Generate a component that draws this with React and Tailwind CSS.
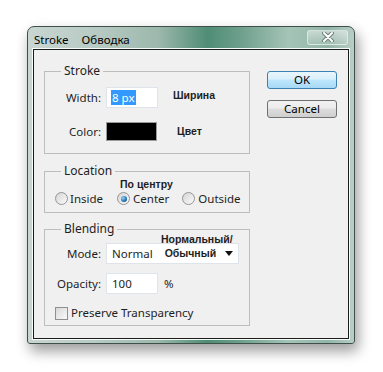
import React from 'react';

const ui = { fontFamily: '"Noto Sans", "Open Sans", sans-serif' };
const note = { fontFamily: '"Liberation Sans", Arial, sans-serif' };

function Radio({ checked }) {
  return (
    <span className="flex h-[13px] w-[13px] items-center justify-center rounded-full border border-[#959595] bg-[linear-gradient(135deg,#d4d4d4,#fbfbfb)]">
      {checked && (
        <span className="h-[6px] w-[6px] rounded-full bg-[radial-gradient(circle_at_35%_35%,#9ad3f5,#1c6fae_60%,#0d3f6b)]" />
      )}
    </span>
  );
}

function Group({ title, className, children }) {
  return (
    <fieldset className={`border border-[#bdbdbd] ${className}`}>
      <legend className="ml-[16px] px-[3px] text-[12px] leading-[16px] text-[#1e1e1e]">{title}</legend>
      {children}
    </fieldset>
  );
}

function Field({ children, className }) {
  return (
    <div className={`flex h-[21px] items-center border border-[#dfe4ea] bg-white ${className}`}>{children}</div>
  );
}

export default function App() {
  return (
    <div className="h-[372px] w-[383px] overflow-hidden bg-white pl-[27px] pt-[26px]" style={ui}>
      <div className="h-[318px] w-[328px] rounded-t-[7px] rounded-b-[3px] border border-[#3f4f49] bg-[linear-gradient(to_right,#c9d5d1_0%,#b8cbc4_20%,#9db8ad_40%,#4f8d75_55%,#6e9f8c_65%,#a5c4b8_80%,#93b5a8_92%,#b9cec6_100%)] shadow-[3px_7px_14px_rgba(0,0,0,0.4)]">
        <div className="flex h-[22px] items-center pl-[6px] pr-[6px] pt-[3px] text-[11.5px] text-black">
          <span>Stroke</span>
          <span className="ml-[13px]">Обводка</span>
          <div className="ml-auto mb-[5px] flex h-[15px] w-[41px] items-center justify-center rounded-[3px] border border-[#e8f0ed]/70 bg-[linear-gradient(to_bottom,rgba(255,255,255,0.45),rgba(255,255,255,0.1))]">
            <svg width="12" height="10" viewBox="0 0 12 10">
              <path d="M2 1 L10 9 M10 1 L2 9" stroke="#6f7f79" strokeWidth="4" strokeLinecap="round" />
              <path d="M2 1 L10 9 M10 1 L2 9" stroke="#ffffff" strokeWidth="2" strokeLinecap="round" />
            </svg>
          </div>
        </div>

        <div className="mx-[5px] h-[290px] border border-[#1c1c1c] bg-[#f0f0f0] shadow-[0_0_0_1px_#f4fbf8] text-[11.5px] text-[#1e1e1e]">
          <div className="flex gap-[17px] pl-[10px] pt-[13px]">
            <div className="flex w-[206px] flex-col">
              <Group title="Stroke" className="h-[91px]">
                <div className="mt-[8px] flex items-center">
                  <span className="w-[56px] text-right">Width:</span>
                  <Field className="ml-[5px] w-[52px] pl-[4px]">
                    <span className="bg-[#3399ff] px-[1px] leading-[15px] text-white">8 px</span>
                  </Field>
                  <span className="ml-[15px] mb-[3px] text-[10.5px] font-bold" style={note}>Ширина</span>
                </div>
                <div className="mt-[14px] flex items-center">
                  <span className="w-[56px] text-right">Color:</span>
                  <div className="ml-[5px] h-[19px] w-[51px] border border-[#9a9a9a] bg-black" />
                  <span className="ml-[20px] text-[10.5px] font-bold" style={note}>Цвет</span>
                </div>
              </Group>

              <Group title="Location" className="mt-[9px] h-[50px]">
                <div className="ml-[75px] text-[10.5px] font-bold leading-[11px]" style={note}>По центру</div>
                <div className="mt-[1px] flex items-center leading-[15px]">
                  <span className="ml-[10px]"><Radio /></span>
                  <span className="ml-[2px]">Inside</span>
                  <span className="ml-[14px]"><Radio checked /></span>
                  <span className="ml-[3px]">Center</span>
                  <span className="ml-[13px]"><Radio /></span>
                  <span className="ml-[3px]">Outside</span>
                </div>
              </Group>

              <Group title="Blending" className="mt-[8px] h-[105px]">
                <div className="mt-[6px] flex items-center">
                  <span className="w-[56px] text-right">Mode:</span>
                  <Field className="relative ml-[5px] w-[133px] pl-[5px]">
                    <span>Normal</span>
                    <span className="ml-[12px] text-[10.5px] font-bold" style={note}>Обычный</span>
                    <span className="absolute left-[54px] top-[-11px] text-[10.5px] font-bold leading-[12px]" style={note}>Нормальный/</span>
                    <svg className="ml-auto mr-[5px]" width="8" height="5" viewBox="0 0 8 5">
                      <path d="M0 0 H8 L4 5 Z" fill="#111" />
                    </svg>
                  </Field>
                </div>
                <div className="mt-[9px] flex items-center">
                  <span className="w-[56px] text-right">Opacity:</span>
                  <Field className="ml-[5px] w-[52px] pl-[5px]">
                    <span>100</span>
                  </Field>
                  <span className="ml-[6px]">%</span>
                </div>
                <div className="mt-[12px] flex items-center">
                  <span className="ml-[10px] h-[13px] w-[13px] border border-[#8f8f8f] bg-[linear-gradient(135deg,#d8d8d8,#fafafa)]" />
                  <span className="ml-[3px] leading-[14px]">Preserve Transparency</span>
                </div>
              </Group>
            </div>

            <div className="flex flex-col gap-[11px] pt-[8px]">
              <button className="h-[18px] w-[70px] rounded-[3px] border border-[#3c7fb1] bg-[linear-gradient(to_bottom,#eaf6fd_0%,#d9f0fc_45%,#bee6fd_50%,#a7d9f5_100%)] text-[11.5px] leading-[14px] text-black">
                OK
              </button>
              <button className="h-[18px] w-[70px] rounded-[3px] border border-[#707070] bg-[linear-gradient(to_bottom,#f2f2f2_0%,#ebebeb_45%,#dddddd_50%,#cfcfcf_100%)] text-[11.5px] leading-[14px] text-black">
                Cancel
              </button>
            </div>
          </div>
        </div>
      </div>
    </div>
  );
}
